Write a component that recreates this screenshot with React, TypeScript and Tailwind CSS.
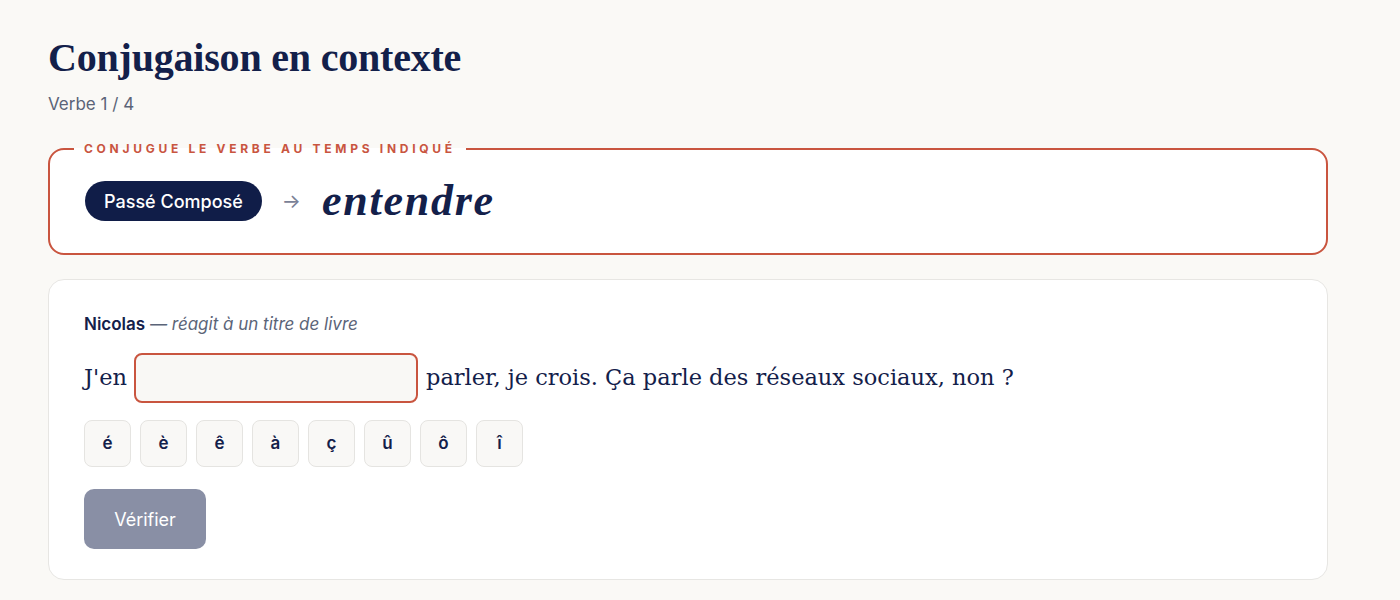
const accents = ["é", "è", "ê", "à", "ç", "û", "ô", "î"];

export default function App() {
  return (
    <div className="min-h-screen bg-[#faf9f6] font-['Inter',sans-serif] text-[#13204a]">
      <div className="w-[1280px] ml-12 pt-[36px]">
        {/* Header */}
        <h1 className="font-['Liberation_Serif',serif] text-[40px] leading-[44px] font-bold tracking-[-0.005em]">
          Conjugaison en contexte
        </h1>
        <p className="mt-[12px] text-[17px] leading-6 text-[#5b6478]">Verbe 1 / 4</p>

        {/* Consigne */}
        <fieldset className="mt-[25px] rounded-[16px] border-2 border-[#c9553f] bg-white px-[35px] pt-[22px] pb-[30px]">
          <legend className="-ml-[11px] px-[10px] text-[12px] leading-4 font-bold tracking-[0.31em] text-[#c9553f]">
            CONJUGUE LE VERBE AU TEMPS INDIQUÉ
          </legend>
          <div className="flex items-center">
            <span className="flex h-10 items-center rounded-full bg-[#101d48] px-[19px] text-[18px] font-medium text-white">
              Passé Composé
            </span>
            <span className="ml-[20px] text-[20px] leading-none text-[#7a8196]">→</span>
            <span className="ml-[21px] font-['Liberation_Serif',serif] text-[44px] font-bold italic leading-none tracking-[0.04em]">
              entendre
            </span>
          </div>
        </fieldset>

        {/* Exercice */}
        <div className="mt-[24px] rounded-[16px] border border-[#e7e6e3] bg-white px-[35px] pt-[34px] pb-[30px]">
          <p className="text-[17px] leading-5">
            <span className="font-semibold">Nicolas</span>
            <span className="italic text-[#5b6478]"> — réagit à un titre de livre</span>
          </p>
          <div className="mt-[19px] flex items-center font-['DejaVu_Serif',serif] text-[22.5px]">
            <span>J'en</span>
            <input
              type="text"
              className="ml-[7px] mr-[8px] h-[50px] w-[284px] rounded-[8px] border-2 border-[#c9553f] bg-[#f9f8f5] px-3 outline-none"
            />
            <span>parler, je crois. Ça parle des réseaux sociaux, non ?</span>
          </div>
          <div className="mt-[17px] flex gap-[9px]">
            {accents.map((a) => (
              <button
                key={a}
                className="flex h-[47px] w-[47px] items-center justify-center rounded-[8px] border border-[#e5e4e1] bg-[#f9f8f6] text-[17px] font-semibold"
              >
                {a}
              </button>
            ))}
          </div>
          <button className="mt-[22px] h-[60px] w-[122px] rounded-[10px] bg-[#898fa5] text-[18px] text-white">
            Vérifier
          </button>
        </div>
      </div>
    </div>
  );
}
